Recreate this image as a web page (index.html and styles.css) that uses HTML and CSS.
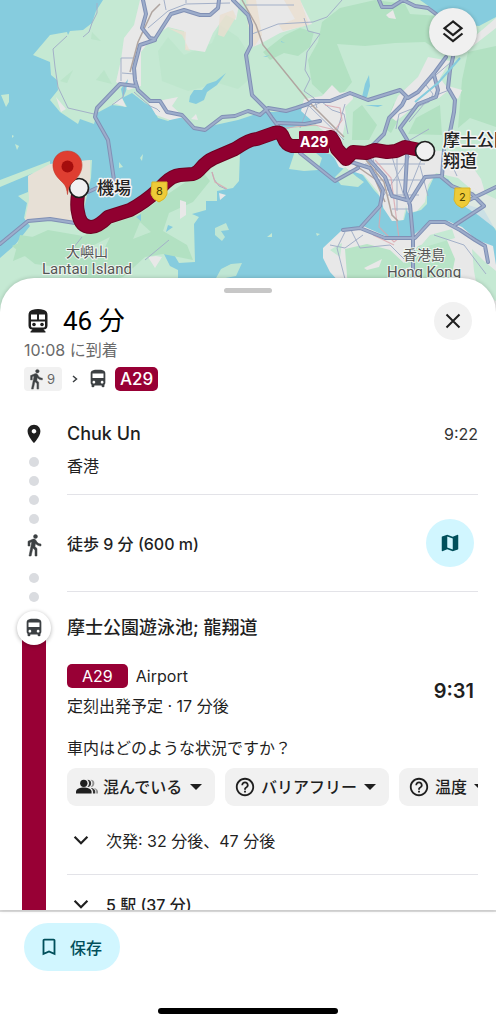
FILE: index.html
```html
<!DOCTYPE html>
<html lang="ja">

<head>
    <meta charset="UTF-8">
    <meta name="viewport" content="width=device-width, initial-scale=1.0">
    <title>経路</title>
    <link rel="stylesheet" href="styles.css">
</head>

<body>
    <!-- shared icons -->
    <svg class="defs" width="0" height="0" aria-hidden="true">
        <symbol id="walk" viewBox="0 0 24 24">
            <path d="M13.5 5.5c1.1 0 2-.9 2-2s-.9-2-2-2-2 .9-2 2 .9 2 2 2zM9.8 8.9L7 23h2.1l1.8-8 2.1 2v6h2v-7.5l-2.1-2 .6-3C14.8 12 16.8 13 19 13v-2c-1.9 0-3.5-1-4.3-2.4l-1-1.6c-.4-.6-1-1-1.7-1-.3 0-.5.1-.8.1L6 8.3V13h2V9.6l1.8-.7" stroke="currentColor" stroke-width=".5" />
        </symbol>
        <symbol id="bus" viewBox="0 0 24 24">
            <path d="M4 16c0 .88.39 1.67 1 2.22V20c0 .55.45 1 1 1h1c.55 0 1-.45 1-1v-1h8v1c0 .55.45 1 1 1h1c.55 0 1-.45 1-1v-1.78c.61-.55 1-1.34 1-2.22V6c0-3.5-3.58-4-8-4s-8 .5-8 4v10zm3.5 1c-.83 0-1.5-.67-1.5-1.5S6.67 14 7.5 14s1.5.67 1.5 1.5S8.33 17 7.5 17zm9 0c-.83 0-1.5-.67-1.5-1.5s.67-1.5 1.5-1.5 1.5.67 1.5 1.5-.67 1.5-1.5 1.5zm1.5-6H6V6h12v5z" />
        </symbol>
        <symbol id="help" viewBox="0 0 24 24">
            <path d="M11 18h2v-2h-2v2zm1-16C6.48 2 2 6.48 2 12s4.48 10 10 10 10-4.48 10-10S17.52 2 12 2zm0 18c-4.41 0-8-3.59-8-8s3.59-8 8-8 8 3.59 8 8-3.59 8-8 8zm0-14c-2.21 0-4 1.79-4 4h2c0-1.1.9-2 2-2s2 .9 2 2c0 2-3 1.75-3 5h2c0-2.25 3-2.5 3-5 0-2.21-1.79-4-4-4z" />
        </symbol>
        <symbol id="caret" viewBox="0 0 12 6">
            <path d="M0 0h12L6 6z" />
        </symbol>
        <symbol id="down" viewBox="0 0 24 24">
            <path d="M5 8.500l7 7 7-7" fill="none" stroke="currentColor" stroke-width="2.400" />
        </symbol>
    </svg>

    <div class="main">
        <div class="map">
            <svg class="map-img" viewBox="0 0 496 320" preserveAspectRatio="xMidYMin slice" role="img" aria-label="地図">
                <defs>
                    <path id="roads" d="M143 0L146 14 142 28 150 38 155 39 162 28 171 14 184 10 200 15 210 15 218 8 219 0M155 40L140 45 134 68 135 80 138 90 150 101 160 101 167 112 182 115 194 128 205 130 222 117 235 116 248 111 260 115 268 108 286 111 296 108 308 104 312 101 330 101 350 93 368 100 400 90 408 98 418 92 435 72 446 57M233 0L248 15 251 25 251 45 246 55 252 95 265 108 272 118 278 126M136 86L120 84 97 108 95 117 108 140 114 180 88 192M372 146L384 134 389 118 402 105 406 97M453 57L450 70 448 88 455 100 454 112 450 132M434 75L438 90 436 97 418 104 400 128 412 148M0 244L28 221 50 219 75 223M300 153L335 181 358 168M379 0L382 7 392 7 403 0 415 6 428 8 436 14M360 228L380 206 383 190 370 168 345 160M343 230L360 228 385 238 415 238 430 222 445 222 460 230 475 240 485 246 488 262M407 155L405 192 410 205 413 238 413 280M365 155L385 177 392 196 410 201 425 177 440 176 452 186 472 194 484 206 455 225M496 187L465 202M444 150L442 176M278 123L305 124 320 121" />
                    <path id="route" d="M79 188Q76 205 78 212 80 227 91 227 98 227 108 217L130 210Q145 202 158 190L165 183Q172 176 180 175L193 174Q197 173 201 168 207 161 214 158L235 149Q250 139 257 139L274 133Q281 131 283 137 286 145 292 146L305 146Q325 138 331 137 335 142 337 149L346 159 353 152 366 153 375 150 387 152 396 151 405 147 425 151" />
                    <path id="shield" d="M152 182h15v12q-1 5-8 8-7-3-8-8z" />
                </defs>
                <rect width="496" height="320" fill="#86ccde" />

                <!-- new territories and kowloon -->
                <path fill="#c5e9d3" d="M103 0L96 11 92 23 83 30 70 31 68 35 67 32 50 35 33 55 50 62 51 75 57 80 58 90 50 100 60 112 78 124 80 119 94 124 97 113 112 105 127 107 122 98 132 93 145 103 152 107 158 118 168 121 179 115 190 126 201 131 215 125 238 120 262 112 278 112 290 109 300 107 308 107 317 114 322 123 297 126 284 130 290 141 310 150 330 154 345 168 362 174 374 190 384 201 383 208 390 214 392 221 404 220 408 204 411 213 421 210 427 204 427 192 434 177 448 179 468 205 484 210 496 231V0z" />
                <g fill="#b2e1c2">
                    <path d="M322 22L340 8 375 0 405 4 410 14 440 16 450 55 437 50 425 42 395 43 365 46 337 44 345 65 352 82 344 92 325 96 312 84 308 60 318 42z" />
                    <path d="M263 52L285 35 300 28 314 32 310 47 298 56 284 53 270 60z" />
                    <path d="M468 52L496 46V127L470 118 458 128 462 80z" />
                    <path d="M362 105L377 125 369 140 352 140 353 112zM394 103L402 113 391 133 384 128zM416 118L440 105 442 135 408 134z" />
                    <path d="M250 55l-12-18-18-12-8 18-28 12-16-18-10 14 4 30 26 10 30-8 20 6 12-10z" opacity=".35" />
                    <path d="M104 70l8 14-16-4zM92 32l9 9-10-2zM73 70l-6 13-7-2z" opacity=".5" />
                </g>

                <!-- built-up areas -->
                <g fill="#e8e8e8">
                    <path d="M140 0H240L236 20 226 15 213 33 205 52 186 49 184 31 168 27 152 38 141 52 141 86 128 90 116 82 121 60 124 38 134 25z" />
                    <path d="M248 0H300L312 24 300 27 280 33 260 44 250 48z" />
                    <path d="M56 97l10 12-5 3zM113 103l9-5 4 9zM145 97l12 6 6-3 15-3-6 9 12 11-14 3-14-5zM191 119l5-5 2 6z" />
                    <path d="M304 99l18-3 10-11 8 8 12-2 1 8-8 8 1 12-5 24-20-14-20-18z" />
                    <path d="M418 77l10-20 22 4-10 17 9 12-10 8-20 4-15 13-8 6-7-5 9-20z" />
                    <path d="M475 36l21-18v10l-32 25zM330 149l38 0 14-2 60 4 25 8 14 20 5 17-14-6-14-12-22-5-8 12-3 17-8 9-9 2-2-7-3 14-11 1-8-12-6-17-14-17-25-8z" />
                    <path d="M470 187l26 12v30l-18-14-22-14z" opacity=".7" />
                    <path d="M386 15l7-5 3 9-7-1zM448 86l14 4-4 9-9-5z" />
                </g>
                <path d="M168 28l18 4-1 18 5 1-8-16zM220 15l13-5 3 7-12 20-6-2zM246 0h10l6 35-8 12-6-22zM284 0l16-1 9 26-26 6-4-6 16-6z" fill="#eadfd0" opacity=".8" />
                <path d="M420 0l10 7 9 10 10 5 30 4 17-9V0z" fill="#86ccde" />
                <path d="M190 96l4-6 8 0 5-6 9-3 10-8-9 12-10 7-3 8-8 4-7-2zM362 97l3-13 4-9 1 11-3 11zM121 89l7-10-2 12-3 7zM281 41l4 2-4-1zM263 57l7-2-4 2zM365 105l18 0-5 2z" fill="#86ccde" />

                <!-- lantau -->
                <path fill="#c5e9d3" d="M0 180L50 161 50 166 0 187zM28 176L50 164 92 160 91 178 80 226 95 232 130 210 160 190 190 174 211 168 213 158 226 154 240 153 239 181 233 188 217 191 217 201 206 201 206 210 192 214 199 217 194 224 195 262 179 263 173 253 164 254 170 266 178 270V320H0V258L15 245 30 226 24 218 27 203 18 196 28 192z" />
                <path fill="#b2e1c2" d="M48 230l35 6 20-9 35-12 24-17 40-27 8 10-17 21-24 11-6 18 24 14 6 15-30-6-18 3-22 20-30 8-28-17-30-4-23-18zM20 235l20 3-8 15-19 8zM100 240l28-6-12 22-22 6z" />
                <path fill="#c5e9d3" d="M88 248l22-11-10 21zM140 222l11 10-18 7zM215 280l6-11 10-5 11-1-6 13zM215 228l11-5 3 7-8 1 4 6-3 4-7-6z" opacity=".9" />
                <path fill="#e7e0d6" d="M28 176L50 164 90 160 90 180 77 224 50 219 25 220 29 200z" />
                <path fill="#e8e8e8" d="M148 257l8-1 6 1-7 11zM180 200l6 2 0 13-6 4zM219 193l7 2-6 5zM69 216l8-4-2 10z" />
                <path fill="#c5e9d3" d="M1 95l8-1 0 8-3 5zM12 135l2 1-2 2zM119 162l4 5-4 1zM140 158l3-4-1 7zM15 144l4 2-2 4zM267 237l5-4 0 4-6 0zM316 233l4 1-3 2z" />
                <path fill="#86ccde" d="M168 225l5 2-7 5zM136 217l5-3 0 7zM126 214l4-4 3 4z" />

                <!-- small islands and tsing yi -->
                <path fill="#c5e9d3" d="M294 142l16 6 12 10-4 12-14 1-15-2 5-15zM335 177l10-10 12 10 7 5-6 5-17-2z" />

                <!-- hong kong island -->
                <path fill="#e8e8e8" d="M323 248l18-17 22-5 27 12 21-1 15-12 22-4 14 6 15 13 16 6 3 19V320H350l-8-35-12-13-7-14z" />
                <path fill="#b8e4c7" d="M345 249l22-5 23 6 14 13 14-17 28-8 9 21-4 20 8 41H360l-12-31z" />
                <path fill="#c5e9d3" d="M330 250l12-7-2 14zM472 249l12 12 12 10v30l-18-8-4-22zM418 249l12-14 22-6 3 9z" />
                <path fill="#e8e8e8" d="M364 268l18-9-3 8-12 3zM398 272l14-6 5 9z" />

                <!-- minor roads -->
                <g fill="none" stroke="#a3b0c8" stroke-width="1">
                    <path d="M97 3v10l-5 10-3 9-6 5M67 36L53 49l2 18 3 20 10 21 26 6M148 28l20-17 18-7 44-1M121 58h13v28M121 58v23M122 73l12 1M112 105l11-8 2-14M134 92l16 14 7 3 3 3M164 0l2 10M186 0v3" />
                    <path d="M252 34l26-10 35-2 14-5 15-17M304 18l4 13 12 3-13 18-2 18 5 9-6 12 10 7 3 10M246 5h48M310 107l12-5 10 8 12 4 4 20M345 104l-9 31M307 104l37 36M300 128l10-26" />
                    <path d="M426 85l7 9-4 8-30 12-3 15M409 122l20-24 20-8M430 80l20-17M405 143l24-14" />
                    <path d="M145 260l24-20M70 252l12-15M212 172l2 7 5 7 7 3" />
                    <path d="M372 154l10 44 28-42M390 150l15 50 20-50M365 164h60M378 180h45M388 195h31M392 209h18M420 166l8 30M397 151v60M445 150l12 26M434 235l30 10 22 29M345 232l-8 16 8 31-2 13M330 245l15 3 18-13M350 228l10 20 30-3 14 14" />
                </g>
                <g fill="none" stroke="#dba5ac" stroke-width="1.200" opacity=".8">
                    <path d="M325 105l15 3 2 12-7 10M375 160l16 18 8 60-5 4-15-15 2-25M373 235l21 10M212 172l3 10 12 7M285 128l30-3 20 5" />
                </g>
                <path d="M242 0l14 25 7 20 47 58 34 34M160 4l-8 8-14 30-8 30M366 160l18 22 8 33 6 6M355 165l20 14 10 23" fill="none" stroke="#b0a5a0" stroke-width="1.500" />

                <!-- highways -->
                <use href="#roads" class="road-edge" />
                <use href="#roads" class="road-fill" />
                <path d="M460 58L438 83 415 102" fill="none" stroke="#86ccde" stroke-width="2" />

                <!-- bus route -->
                <use href="#route" class="route-edge" />
                <use href="#route" class="route-fill" />
                <rect x="299" y="131" width="30" height="22" rx="1" fill="#900030" />
                <text class="tag" x="300" y="147">A29</text>

                <circle cx="425" cy="151" r="9.500" fill="#f1f1f1" stroke="#1f1f1f" stroke-width="1.700" />
                <circle cx="79" cy="188" r="9.500" fill="#f1f1f1" stroke="#1f1f1f" stroke-width="1.700" />
                <path d="M67.500 194.500c-1-9-3-10-8-15C47 167 54 151 67.500 151s20.500 16 8 28.500c-5 5-7 6-8 15z" fill="#df3e31" stroke="#c0392b" stroke-width=".6" />
                <circle cx="67.500" cy="166.500" r="6" fill="#a50d0d" />

                <use href="#shield" class="shield" />
                <use href="#shield" class="shield" x="303" y="6" />
                <text class="num" x="156" y="195">8</text>
                <text class="num" x="459" y="201">2</text>

                <g class="place">
                    <text x="97" y="194">機場</text>
                    <text x="443" y="146">摩士公園</text>
                    <text x="443" y="167">翔道</text>
                </g>
                <g class="area">
                    <text x="87" y="257">大嶼山</text>
                    <text class="en" x="87" y="274">Lantau Island</text>
                    <text x="424" y="260">香港島</text>
                    <text class="en" x="424" y="277">Hong Kong</text>
                </g>
            </svg>
            <button class="layers" aria-label="レイヤ">
                <svg class="outline" width="24" height="26" viewBox="0 0 24 26" stroke-width="2.200">
                    <path d="M12 2.500L3.500 9.200 12 16l8.500-6.800z" />
                    <path d="M2.500 14.500L12 22l9.500-7.500" />
                </svg>
            </button>
        </div>

        <div class="sheet">
            <div class="handle"></div>

            <div class="head">
                <div class="title">
                    <svg width="28" height="28" viewBox="0 0 28 28">
                        <path d="M8 3q6-2 12 0 3.500 1 3.500 5v10.500q0 4-4 4l2 2v1h-15v-1l2-2q-4 0-4-4V8Q4.500 4 8 3z" fill="#1f1f1f" />
                        <path d="M7 7.500h6v5H7zM15 7.500h6v5h-6zM7 14.500h14V19q0 1.500-1.500 1.500h-11Q7 20.500 7 19z" fill="#fff" />
                        <circle cx="10" cy="17.500" r="1.800" fill="#1f1f1f" />
                        <circle cx="18" cy="17.500" r="1.800" fill="#1f1f1f" />
                    </svg>
                    <h1>46 分</h1>
                </div>
                <button class="close" aria-label="閉じる">
                    <svg class="outline" width="16" height="16" viewBox="0 0 16 16" stroke-width="2">
                        <path d="M1.500 1.500l13 13M14.500 1.500l-13 13" />
                    </svg>
                </button>
            </div>
            <p class="arrive">10:08 に到着</p>
            <div class="modes">
                <span class="walk-chip"><svg width="22" height="22"><use href="#walk" /></svg>9</span>
                <svg class="outline arrow" width="6" height="10" viewBox="0 0 6 10" stroke-width="1.500"><path d="M1 2L4.500 5 1 8" /></svg>
                <svg width="22" height="22"><use href="#bus" /></svg>
                <span class="line">A29</span>
            </div>

            <div class="leg">
                <div class="rail">
                    <svg class="pin" width="22" height="22" viewBox="0 0 24 24">
                        <path d="M12 2C8.130 2 5 5.130 5 9c0 5.250 7 13 7 13s7-7.750 7-13c0-3.870-3.130-7-7-7zm0 9.500c-1.380 0-2.500-1.120-2.500-2.500s1.120-2.500 2.500-2.500 2.500 1.120 2.500 2.500-1.120 2.500-2.500 2.500z" />
                    </svg>
                    <div class="dots"><i></i><i></i><i></i><i></i></div>
                    <svg width="24" height="24"><use href="#walk" /></svg>
                    <div class="dots after"><i></i><i></i></div>
                </div>
                <div class="info">
                    <div class="stop">
                        <div>
                            <h2>Chuk Un</h2>
                            <p>香港</p>
                        </div>
                        <span class="time">9:22</span>
                    </div>
                    <div class="walk">
                        <h3>徒歩 9 分 (600 m)</h3>
                        <button class="map-btn" aria-label="地図を表示">
                            <svg width="22" height="22" viewBox="0 0 24 24">
                                <path d="M20.500 3l-.16.03L15 5.100 9 3 3.360 4.900c-.21.07-.36.25-.36.48V20.500c0 .28.22.5.5.5l.16-.03L9 18.900l6 2.100 5.640-1.900c.21-.07.36-.25.36-.48V3.500c0-.28-.22-.5-.5-.5zM15 19l-6-2.110V5l6 2.110V19z" />
                            </svg>
                        </button>
                    </div>
                </div>
            </div>

            <div class="leg ride">
                <div class="rail">
                    <div class="bus-icon"><svg width="22" height="22"><use href="#bus" /></svg></div>
                    <div class="bar"></div>
                </div>
                <div class="info">
                    <h2>摩士公園遊泳池; 龍翔道</h2>
                    <div class="depart">
                        <div>
                            <p class="dest"><span class="line wide">A29</span>Airport</p>
                            <p class="status">定刻出発予定 · 17 分後</p>
                        </div>
                        <span class="time big">9:31</span>
                    </div>
                    <p class="ask">車内はどのような状況ですか？</p>
                    <div class="chips">
                        <label class="chip">
                            <svg width="22" height="22" viewBox="0 0 24 24">
                                <circle cx="8.500" cy="8" r="4" />
                                <path d="M0 19v-2c0-3 5-4.500 8.500-4.500S17 14 17 17v2z" />
                                <path d="M12.500 4a4 4 0 0 1 0 8q3.500-4 0-8zM16 12.800q5 1 5 4.200v2h-2.500v-2q0-2.500-2.500-4.200z" opacity=".9" />
                                <path d="M16 4a4 4 0 0 1 0 8q4-4 0-8zM19.500 13q4.500 1 4.500 4v2h-2v-2q0-2-2.500-4z" opacity=".45" />
                            </svg>
                            <select aria-label="混雑"><option>混んでいる</option></select>
                            <svg class="caret" width="12" height="6"><use href="#caret" /></svg>
                        </label>
                        <label class="chip">
                            <svg width="22" height="22"><use href="#help" /></svg>
                            <select aria-label="設備"><option>バリアフリー</option></select>
                            <svg class="caret" width="12" height="6"><use href="#caret" /></svg>
                        </label>
                        <label class="chip">
                            <svg width="22" height="22"><use href="#help" /></svg>
                            <select aria-label="車内の温度"><option>温度</option></select>
                            <svg class="caret" width="12" height="6"><use href="#caret" /></svg>
                        </label>
                    </div>
                    <button class="more next"><svg width="22" height="22"><use href="#down" /></svg>次発: 32 分後、47 分後</button>
                    <button class="more stations"><svg width="22" height="22"><use href="#down" /></svg>5 駅 (37 分)</button>
                </div>
            </div>
        </div>

        <div class="bottom">
            <button class="save">
                <svg width="22" height="22" viewBox="0 0 24 24">
                    <path d="M17 3H7c-1.100 0-1.990.9-1.990 2L5 21l7-3 7 3V5c0-1.100-.9-2-2-2zm0 15l-5-2.180L7 18V5h10v13z" />
                </svg>
                保存
            </button>
            <div class="home"></div>
        </div>
    </div>
</body>

</html>
```
FILE: styles.css
```css
* {
    margin: 0;
    padding: 0;
    box-sizing: border-box;
    font-family: Inter, "Noto Sans CJK JP", sans-serif;
}

body {
    background-color: white;
    color: #1f1f1f;
}

svg {
    flex-shrink: 0;
    fill: currentColor;
}

.outline {
    fill: none;
    stroke: currentColor;
}

button {
    border: none;
    background: none;
    color: inherit;
    cursor: pointer;
}

.defs {
    position: absolute;
}

.main {
    height: 100vh;
    display: flex;
    flex-direction: column;
    overflow: hidden;
}

/* map */
.map {
    position: relative;
    height: 320px;
    flex-shrink: 0;
}

.map-img {
    display: block;
    width: 100%;
    height: 100%;
}

.road-edge,
.road-fill,
.route-edge,
.route-fill {
    fill: none;
    stroke-linecap: round;
    stroke-linejoin: round;
}

.road-edge {
    stroke: #8090b5;
    stroke-width: 4px;
}

.road-fill {
    stroke: #9dadcb;
    stroke-width: 2px;
}

.route-edge {
    stroke: #6e0022;
    stroke-width: 14px;
}

.route-fill {
    stroke: #900030;
    stroke-width: 12px;
}

.shield {
    fill: #eecb38;
    stroke: #d9b526;
}

.tag {
    font-size: 14px;
    font-weight: 700;
    fill: white;
}

.num {
    font-size: 11px;
    fill: #4a3d00;
}

.place text {
    font-size: 17px;
    font-weight: 500;
    fill: #222;
    stroke: #f4f4f4;
    stroke-width: 3px;
    stroke-linejoin: round;
    paint-order: stroke;
}

.area text {
    font-family: Roboto, "Noto Sans CJK JP", sans-serif;
    font-size: 14px;
    text-anchor: middle;
    fill: #555;
    stroke: #eef5f0;
    stroke-width: 2px;
    paint-order: stroke;
}

.area .en {
    font-size: 15px;
}

.layers {
    position: absolute;
    top: 8px;
    right: 19px;
    width: 48px;
    height: 48px;
    border-radius: 50%;
    background-color: #f0f0f0;
    box-shadow: 0 1px 4px rgba(0, 0, 0, 0.3);
    display: flex;
    align-items: center;
    justify-content: center;
}

/* sheet */
.sheet {
    flex: 1;
    min-height: 0;
    margin-top: -42px;
    padding-top: 10px;
    border-radius: 34px 34px 0 0;
    background-color: white;
    box-shadow: 0 0 4px rgba(0, 0, 0, 0.2);
    position: relative;
    overflow: hidden;
}

.handle {
    width: 48px;
    height: 5px;
    margin: 0 auto 9px;
    border-radius: 3px;
    background-color: #c7c7c7;
}

.head {
    display: flex;
    justify-content: space-between;
    align-items: center;
    height: 38px;
    padding: 0 24px;
}

.title {
    display: flex;
    align-items: center;
    gap: 11px;
}

h1 {
    font-family: Roboto, "Noto Sans CJK JP", sans-serif;
    font-size: 26px;
    font-weight: 400;
    line-height: 32px;
    color: black;
}

.close {
    width: 38px;
    height: 38px;
    border-radius: 50%;
    background-color: #f1f1f1;
    display: flex;
    align-items: center;
    justify-content: center;
}

.arrive {
    padding-left: 24px;
    font-size: 16px;
    line-height: 20px;
    color: #6a6a6a;
}

.modes {
    display: flex;
    align-items: center;
    margin-top: 7px;
    padding-left: 24px;
    gap: 6px;
    color: #3c4043;
}

.walk-chip {
    display: flex;
    align-items: center;
    width: 38px;
    height: 24px;
    border-radius: 4px;
    background-color: #f1f1f1;
    font-size: 13px;
    color: #666;
}

.walk-chip svg {
    margin-left: 1px;
    fill: #3c4043;
}

.arrow {
    margin: 0 3px 0 4px;
}

.line {
    padding: 0 5px;
    border-radius: 5px;
    background-color: #980035;
    color: white;
    font-size: 17px;
    font-weight: 500;
    line-height: 24px;
}

/* steps */
.leg {
    display: grid;
    grid-template-columns: 67px 1fr;
    margin-top: 31px;
    padding-right: 18px;
}

.ride {
    margin-top: 9px;
}

.rail {
    display: flex;
    flex-direction: column;
    align-items: center;
    color: #3c4043;
}

.pin {
    height: 24px;
    color: #1f1f1f;
}

.dots {
    display: flex;
    flex-direction: column;
    gap: 9px;
    margin: 11px 0 9px;
}

.dots i {
    width: 10px;
    height: 10px;
    border-radius: 50%;
    background-color: #dadce0;
}

.after {
    margin: 16px 0 0;
}

.info {
    min-width: 0;
}

h2 {
    font-size: 18px;
    font-weight: 500;
    line-height: 24px;
}

.stop {
    display: flex;
    justify-content: space-between;
    padding-bottom: 16px;
    border-bottom: 1px solid #e3e3e8;
}

.stop p {
    margin-top: 8px;
    font-size: 16px;
    line-height: 24px;
}

.time {
    font-size: 16px;
    line-height: 24px;
    color: #333;
}

.walk {
    display: flex;
    align-items: center;
    justify-content: space-between;
    height: 97px;
    padding-right: 4px;
    border-bottom: 1px solid #e3e3e8;
}

h3 {
    font-size: 16px;
    font-weight: 500;
}

.map-btn {
    width: 48px;
    height: 48px;
    border-radius: 50%;
    background-color: #d1f6ff;
    color: #004f5b;
    display: flex;
    align-items: center;
    justify-content: center;
}

.bus-icon {
    width: 34px;
    height: 34px;
    flex-shrink: 0;
    border-radius: 50%;
    background-color: white;
    box-shadow: 0 1px 4px rgba(0, 0, 0, 0.3);
    display: flex;
    align-items: center;
    justify-content: center;
    z-index: 1;
}

.bar {
    flex: 1;
    width: 24px;
    margin-top: -8px;
    background-color: #980035;
}

.ride h2 {
    line-height: 34px;
}

.depart {
    display: flex;
    align-items: center;
    justify-content: space-between;
    margin-top: 19px;
    padding-right: 4px;
}

.dest {
    display: flex;
    gap: 8px;
    font-size: 16px;
    line-height: 24px;
}

.wide {
    padding: 0 15px;
    font-size: 16px;
    font-weight: 400;
}

.status,
.ask {
    margin-top: 6px;
    font-size: 16px;
    line-height: 24px;
}

.ask {
    margin-top: 18px;
}

.big {
    font-size: 20px;
    font-weight: 600;
    color: #1f1f1f;
}

.chips {
    display: flex;
    gap: 10px;
    margin-top: 8px;
    overflow: hidden;
}

.chip {
    display: flex;
    align-items: center;
    flex-shrink: 0;
    height: 38px;
    padding: 0 13px 0 9px;
    border-radius: 9px;
    background-color: #f1f1f1;
}

.chip select {
    appearance: none;
    margin-left: 5px;
    border: none;
    background: none;
    font-size: 16px;
    font-weight: 500;
    color: #1f1f1f;
}

.caret {
    margin-left: 6px;
}

.more {
    display: flex;
    align-items: center;
    gap: 14px;
    width: 100%;
    padding-left: 3px;
    font-size: 16px;
    text-align: left;
}

.next {
    height: 69px;
    border-bottom: 1px solid #e3e3e8;
}

.stations {
    height: 58px;
    font-weight: 500;
}

/* bottom bar */
.bottom {
    height: 114px;
    flex-shrink: 0;
    padding: 11px 24px 0;
    border-top: 2px solid #e0e0e0;
    background-color: white;
}

.save {
    display: flex;
    align-items: center;
    gap: 10px;
    height: 48px;
    padding: 0 18px 0 14px;
    border-radius: 24px;
    background-color: #d1f6ff;
    color: #004f5b;
    font-size: 16px;
    font-weight: 500;
}

.home {
    width: 40%;
    height: 6px;
    margin: 37px auto 0;
    border-radius: 3px;
    background-color: black;
}
```
